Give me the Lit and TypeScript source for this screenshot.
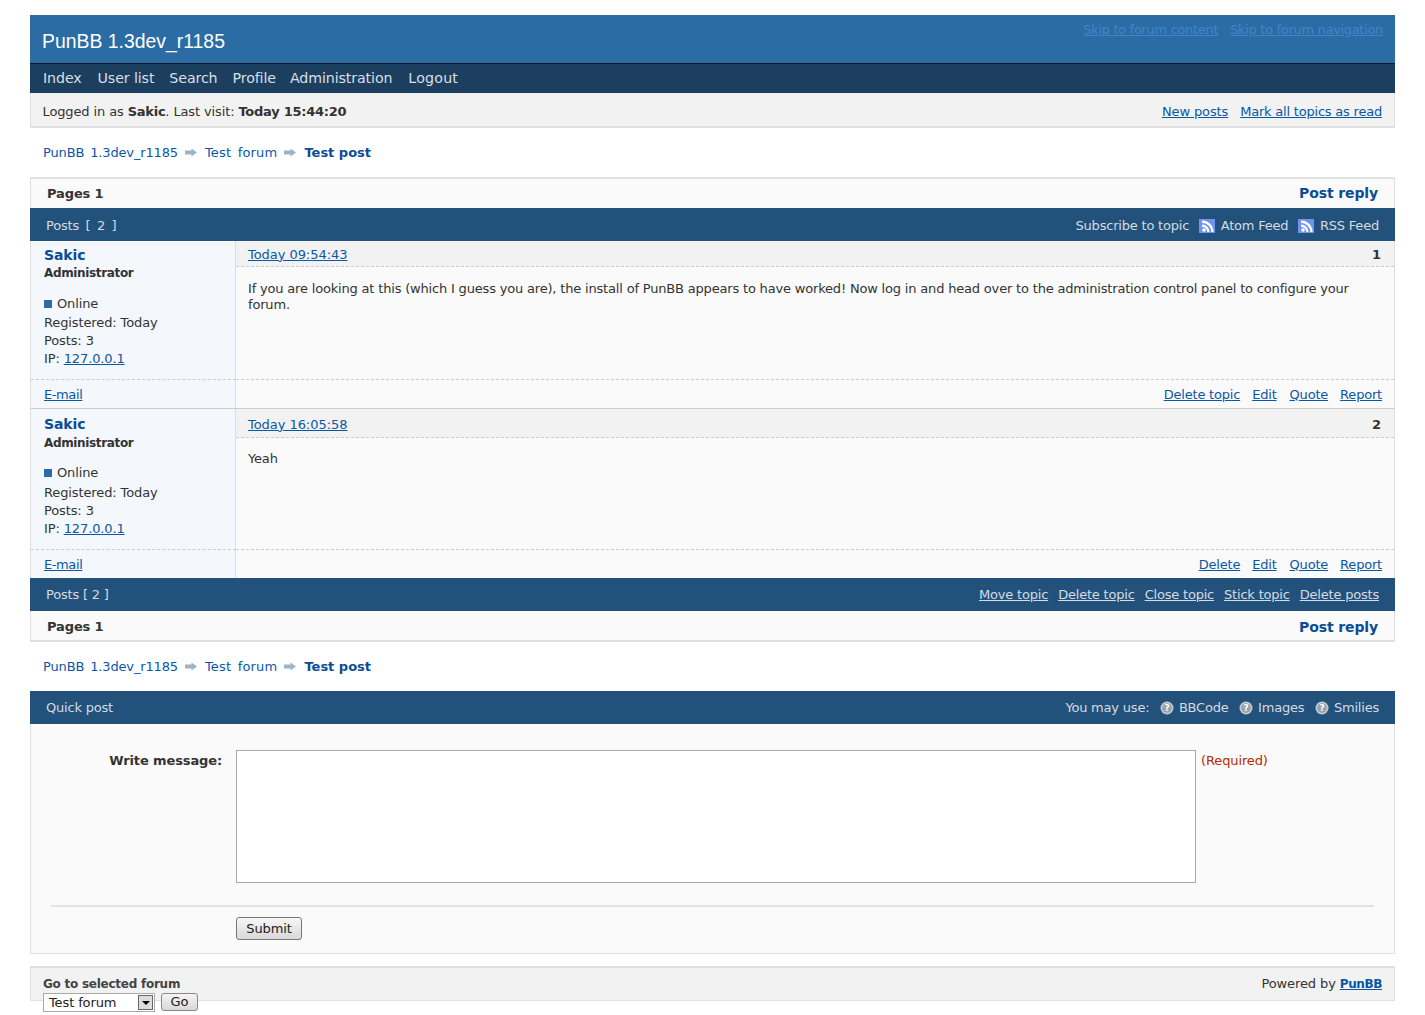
import { LitElement, html, css } from "lit";
import { customElement } from "lit/decorators.js";

const arrow = html`<svg class="arr" width="12" height="9" viewBox="0 0 12 9"><path d="M0 2.500h6.500V0.500L12 4.500 6.500 8.500V6.500H0z" fill="#9db4c8"/></svg>`;
const rss = html`<svg class="ico" width="16" height="14" viewBox="0 0 16 14"><rect width="16" height="14" fill="#6f94ee"/><g fill="#fff"><circle cx="5" cy="11" r="1.800"/><path d="M3 5.500a7.500 7.500 0 0 1 7.500 7.500H8.300A5.300 5.300 0 0 0 3 7.700z"/><path d="M3 1.500a11.500 11.500 0 0 1 11.500 11.500h-2.200A9.300 9.300 0 0 0 3 3.700z"/></g></svg>`;
const help = html`<svg class="ico" width="14" height="14" viewBox="0 0 14 14"><circle cx="7" cy="7" r="6.500" fill="#c3cbd2"/><circle cx="7" cy="7" r="4.800" fill="#99a2aa"/><text x="7" y="10.200" text-anchor="middle" font-size="9" font-weight="700" font-family="DejaVu Sans" fill="#fff">?</text></svg>`;

interface Post { time: string; num: string; body: string; del: string; }
const posts: Post[] = [
  { time: "Today 09:54:43", num: "1", del: "Delete topic",
    body: "If you are looking at this (which I guess you are), the install of PunBB appears to have worked! Now log in and head over to the administration control panel to configure your forum." },
  { time: "Today 16:05:58", num: "2", del: "Delete", body: "Yeah" },
];

@customElement("app-root")
export class AppRoot extends LitElement {
  static styles = css`
    :host { display: block; padding: 15px 30px 0; font: 13px/18px "DejaVu Sans", Verdana, sans-serif; color: #333; background: #fff; height: 1000px; overflow: hidden; letter-spacing: -0.12px; }
    a { color: #0a57a6; }
    .brand { height: 48px; background: #2b6ca5; display: flex; justify-content: space-between; }
    .brand h1 { margin: 0; padding: 15px 0 0 12px; font: 19.400px/23px "Liberation Sans", Arial, sans-serif; color: #fff; letter-spacing: 0; }
    .skip { display: flex; gap: 12px; padding: 6px 12px 0 0; letter-spacing: -0.320px; }
    .skip a { color: #3f86c8; }
    .nav { border-top: 1px solid #0c1a28; background: #1c3f60; display: flex; align-items: center; padding: 0 0 2px 13px; box-sizing: border-box; height: 30px; font-size: 14.200px; letter-spacing: -0.100px; }
    .nav span { color: #d9dfe5; margin-right: 15px; }
    .nav span.a { margin-right: 16px; }
    .nav span.p { margin-right: 14px; }
    .nav span.l { letter-spacing: 0.200px; }
    .welcome { background: #f2f2f2; border: 1px solid #e0e0e0; border-width: 0 1px 2px; display: flex; justify-content: space-between; align-items: center; padding: 4px 12px 0 11.500px; box-sizing: border-box; height: 35px; }
    .welcome b { letter-spacing: -0.250px; }
    .links { display: flex; gap: 12px; }
    .links a:last-child { letter-spacing: -0.210px; }
    .crumbs { height: 49px; display: flex; align-items: center; padding-left: 13px; color: #0a57a6; letter-spacing: 0; }
    .crumbs span:nth-of-type(1) { letter-spacing: -0.150px; word-spacing: 2px; }
    .crumbs span:nth-of-type(2) { letter-spacing: 0.200px; word-spacing: 2px; }
    .crumbs .arr { margin: 0 8px 0 7px; }
    .crumbs b { color: #0a4d96; }
    .pages { height: 31px; box-sizing: border-box; background: #fafafa; border: 1px solid #e0e0e0; display: flex; justify-content: space-between; align-items: center; padding: 0 16px; }
    .pages.top { border-width: 2px 1px 0; }
    .pages.top b.r { margin-bottom: 1px; }
    .pages.bot { border-width: 0 1px 2px; padding-top: 2px; }
    .pages b.r { color: #0a4d96; font-size: 14px; }
    .head { height: 33px; background: #22527c; display: flex; justify-content: space-between; align-items: center; padding: 0 16px; color: #d5dbe1; box-sizing: border-box; letter-spacing: -0.200px; }
    .head.first { padding-top: 2px; }
    .head.first > span:first-child { word-spacing: 2.600px; }
    .head .r { display: flex; align-items: center; }
    .head a { color: #d5dbe1; margin-left: 10px; }
    .head .ico { margin: 0 6px 0 9.500px; }
    .head.help .ico { margin: 0 5px 0 10.500px; }
    .post { display: grid; grid-template-columns: 205px 1fr; border: 1px solid #e0e0e0; border-width: 0 1px; background: #fafafa; }
    .post.first { grid-template-rows: 139px 28px; border-bottom: 1px solid #ccc; }
    .post.second { grid-template-rows: 141px 28px; }
    .side { background: #f4f8fd; border-right: 1px solid #ddd; padding: 5px 0 0 13px; box-sizing: border-box; border-bottom: 1px dashed #ccc; }
    .second .side { padding-top: 6px; }
    .side .name { font: 700 14px/18px "DejaVu Sans", sans-serif; color: #0a4d96; display: block; }
    .second .side .name { line-height: 19px; }
    .side .title { font-weight: 700; font-size: 12px; letter-spacing: -0.350px; display: block; margin-bottom: 13px; }
    .second .side .title { margin-bottom: 12px; }
    .side p { margin: 0; line-height: 18px; }
    .side p.on { margin-bottom: 1px; }
    .second .side p.on { margin-bottom: 2px; }
    .side .dot { display: inline-block; width: 8px; height: 8px; background: #2b6ca5; margin-right: 5px; }
    .main { display: flex; flex-direction: column; border-bottom: 1px dashed #ccc; min-width: 0; }
    .phead { height: 26px; background: #f2f2f2; border-bottom: 1px dashed #ccc; display: flex; justify-content: space-between; align-items: center; padding: 2px 13px 0 12px; box-sizing: border-box; flex: none; letter-spacing: -0.050px; }
    .second .phead { height: 29px; padding-top: 3px; }
    .pbody { padding: 14px 40px 0 12px; line-height: 16px; letter-spacing: -0.180px; }
    .second .pbody { padding-top: 13px; }
    .sf { background: #f4f8fd; border-right: 1px solid #ddd; padding: 6px 0 0 13px; letter-spacing: -0.400px; }
    .mf { display: flex; justify-content: flex-end; gap: 12px; padding: 6px 12px 0 0; letter-spacing: -0.200px; }
    .mf a.q { margin-left: 1px; }
    .form { height: 230px; box-sizing: border-box; background: #fafafa; border: 1px solid #e0e0e0; border-top: 0; padding: 26px 20px 0; }
    .row { display: flex; align-items: flex-start; }
    .row label { width: 171px; text-align: right; font-weight: 700; flex: none; padding-top: 2px; }
    .ta { width: 958px; height: 131px; margin-left: 14px; background: #fff; border: 1px solid #aaa; flex: none; }
    .req { color: #b52a00; margin-left: 5px; padding-top: 2px; }
    .rule { height: 0; border-top: 2px solid #e2e2e2; margin-top: 22px; }
    .sub { margin: 10px 0 0 185px; width: 66px; height: 23px; box-sizing: border-box; display: flex; align-items: center; justify-content: center; border: 1px solid #777; border-radius: 3px; background: linear-gradient(#f7f7f7, #d8d8d8); color: #222; }
    .foot { margin-top: 12px; height: 35px; box-sizing: border-box; background: #f2f2f2; border: 1px solid #e0e0e0; border-width: 2px 1px 1px; display: flex; justify-content: space-between; padding: 8px 12px 0; }
    .jump b { display: block; font-size: 12px; letter-spacing: -0.250px; line-height: 16px; color: #444; }
    .ctl { display: flex; gap: 6px; margin-top: 1px; }
    .sel { width: 112px; height: 19px; box-sizing: border-box; background: #fff; border: 1px solid #aaa; display: flex; justify-content: space-between; align-items: center; padding: 0 1px 0 5px; color: #222; }
    .sel i { width: 15px; height: 15px; box-sizing: border-box; border: 1px solid #666; background: #ddd; display: flex; align-items: center; justify-content: center; }
    .sel i::after { content: ""; border: 4px solid transparent; border-top-color: #000; border-bottom: 0; }
    .go { width: 37px; height: 18px; box-sizing: border-box; display: flex; align-items: center; justify-content: center; border: 1px solid #888; border-radius: 3px; background: linear-gradient(#f5f5f5, #d8d8d8); color: #222; }
    .pow { letter-spacing: -0.100px; margin-top: -1px; }
    .pow b { font-size: 12px; letter-spacing: -0.400px; }
  `;

  crumbs() {
    return html`<div class="crumbs"><span>PunBB 1.3dev_r1185</span>${arrow}<span>Test forum</span>${arrow}<b>Test post</b></div>`;
  }

  post(p: Post, i: number) {
    return html`<div class="post ${i === 0 ? "first" : "second"}">
      <div class="side">
        <span class="name">Sakic</span>
        <span class="title">Administrator</span>
        <p class="on"><span class="dot"></span>Online</p>
        <p>Registered: Today</p>
        <p>Posts: 3</p>
        <p>IP: <a href="#">127.0.0.1</a></p>
      </div>
      <div class="main">
        <div class="phead"><a href="#">${p.time}</a><b>${p.num}</b></div>
        <div class="pbody">${p.body}</div>
      </div>
      <div class="sf"><a href="#">E-mail</a></div>
      <div class="mf"><a href="#">${p.del}</a><a href="#">Edit</a><a class="q" href="#">Quote</a><a href="#">Report</a></div>
    </div>`;
  }

  render() {
    return html`
      <div class="brand">
        <h1>PunBB 1.3dev_r1185</h1>
        <div class="skip"><a href="#">Skip to forum content</a><a href="#">Skip to forum navigation</a></div>
      </div>
      <div class="nav">
        <span class="a">Index</span><span>User list</span><span>Search</span><span class="p">Profile</span><span class="a">Administration</span><span class="l">Logout</span>
      </div>
      <div class="welcome">
        <span>Logged in as <b>Sakic</b>. Last visit: <b>Today 15:44:20</b></span>
        <span class="links"><a href="#">New posts</a><a href="#">Mark all topics as read</a></span>
      </div>
      ${this.crumbs()}
      <div class="pages top"><b>Pages 1</b><b class="r">Post reply</b></div>
      <div class="head first"><span>Posts [ 2 ]</span>
        <span class="r">Subscribe to topic ${rss}Atom Feed ${rss}RSS Feed</span></div>
      ${posts.map((p, i) => this.post(p, i))}
      <div class="head"><span>Posts [ 2 ]</span>
        <span class="r"><a href="#">Move topic</a><a href="#">Delete topic</a><a href="#">Close topic</a><a href="#">Stick topic</a><a href="#">Delete posts</a></span></div>
      <div class="pages bot"><b>Pages 1</b><b class="r">Post reply</b></div>
      ${this.crumbs()}
      <div class="head help"><span>Quick post</span>
        <span class="r">You may use: ${help}BBCode ${help}Images ${help}Smilies</span></div>
      <div class="form">
        <div class="row"><label>Write message:</label><div class="ta"></div><span class="req">(Required)</span></div>
        <div class="rule"></div>
        <div class="sub">Submit</div>
      </div>
      <div class="foot">
        <div class="jump"><b>Go to selected forum</b>
          <div class="ctl"><div class="sel">Test forum<i></i></div><div class="go">Go</div></div>
        </div>
        <span class="pow">Powered by <a href="#"><b>PunBB</b></a></span>
      </div>
    `;
  }
}
